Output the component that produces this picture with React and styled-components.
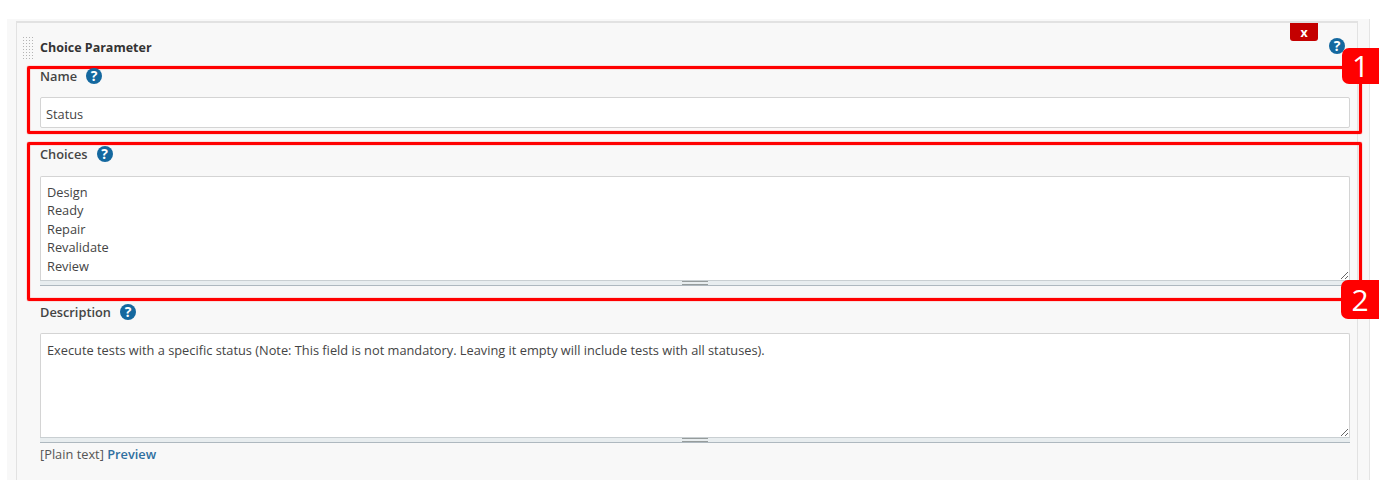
import React from 'react';
import styled, { createGlobalStyle } from 'styled-components';

const GlobalStyle = createGlobalStyle`
  html, body {
    margin: 0;
    padding: 0;
    background: #fff;
    overflow: hidden;
  }
  body {
    font-family: "Open Sans", "Noto Sans", sans-serif;
    font-size: 12.8px;
    color: #333;
  }
`;

const Page = styled.div`
  width: 1379px;
  height: 489px;
  padding: 19px 9px 9px 7px;
  box-sizing: border-box;
  position: relative;
  overflow: hidden;
`;

const Outer = styled.div`
  height: 461px;
  background: #f8f8f8;
  padding-left: 9px;
  padding-right: 11px;
  border-right: 1px solid #e4e4e4;
  box-sizing: border-box;
`;

const TopRule = styled.div`
  height: 3px;
  border-bottom: 1px solid #e2e2e2;
  box-sizing: border-box;
`;

const Panel = styled.div`
  height: calc(100% - 3px);
  border-left: 1px solid #e2e2e2;
  border-right: 1px solid #e2e2e2;
  border-top: 1px solid #e2e2e2;
  box-sizing: border-box;
  position: relative;
`;

const Header = styled.div`
  height: 43px;
  display: flex;
  align-items: center;
  padding: 4px 0 0 5px;
  box-sizing: border-box;
  position: relative;
`;

const Grip = styled.div`
  width: 12px;
  height: 23px;
  margin-right: 6px;
  margin-top: 1px;
  background-image: radial-gradient(circle, #b4b4b4 0.9px, transparent 1px);
  background-size: 3px 3px;
`;

const Title = styled.div`
  font-weight: 700;
  font-size: 12.5px;
  color: #333;
  padding-top: 2px;
`;

const DeleteButton = styled.button`
  position: absolute;
  top: 0;
  right: 39px;
  width: 28px;
  height: 18px;
  padding: 0;
  border: none;
  border-radius: 0 0 3px 3px;
  background: #c40000;
  color: #fff;
  font-family: inherit;
  font-size: 12.5px;
  font-weight: 700;
  line-height: 17px;
  text-align: center;
`;

const Help = styled.span`
  display: inline-flex;
  align-items: center;
  justify-content: center;
  width: 16px;
  height: 16px;
  border-radius: 50%;
  background: #14689f;
  color: #fff;
  font-family: "Open Sans", sans-serif;
  font-size: 14px;
  font-weight: 700;
  line-height: 16px;
`;

const HeaderHelp = styled(Help)`
  position: absolute;
  top: 15px;
  right: 12px;
`;

const Section = styled.section`
  margin: ${(p) => p.$margin};
  padding: ${(p) => p.$padding};
  position: relative;
  box-sizing: border-box;
  ${(p) =>
    p.$marked &&
    `
    border: 3px solid #ff0000;
    border-radius: 2px;
    box-shadow: 0 0 1px #ff0000, inset 0 0 1px #ff0000;
  `}
`;

const LabelRow = styled.div`
  display: flex;
  align-items: center;
  gap: 9px;
  height: ${(p) => p.$height || 16}px;
  color: #444;
  font-size: 12.8px;
  font-weight: 600;
`;

const Input = styled.input`
  display: block;
  width: 100%;
  height: 31px;
  margin-top: 14px;
  padding: 2px 5px 0;
  box-sizing: border-box;
  border: 1px solid #d4d4d4;
  border-radius: 2px;
  background: #fff;
  color: #444;
  font-family: inherit;
  font-size: 12.8px;
  outline: none;
`;

const AreaWrap = styled.div`
  margin-top: ${(p) => p.$top}px;
`;

const Area = styled.textarea`
  display: block;
  width: 100%;
  height: ${(p) => p.$height}px;
  padding: ${(p) => p.$padTop}px 6px 0;
  box-sizing: border-box;
  border: 1px solid #d4d4d4;
  border-bottom: none;
  border-radius: 2px 2px 0 0;
  background: #fff;
  color: #444;
  font-family: inherit;
  font-size: 12.8px;
  line-height: 18.4px;
  resize: vertical;
  overflow: hidden;
  outline: none;
`;

const AreaGrip = styled.div`
  height: 4px;
  background: #e8edef;
  border-top: 1px solid #c9cfd2;
  border-bottom: 1px solid #aeb8bf;
  display: flex;
  align-items: center;
  justify-content: center;

  &::after {
    content: '';
    width: 26px;
    height: 2px;
    border-top: 1px solid #969c9c;
    border-bottom: 1px solid #969c9c;
  }
`;

const FormatRow = styled.div`
  margin-top: 2px;
  font-size: 12.8px;
  color: #555;
`;

const PreviewLink = styled.a`
  color: #2f6f9f;
  font-weight: 600;
  text-decoration: none;
`;

const Badge = styled.div`
  position: absolute;
  right: 0;
  top: ${(p) => p.$top}px;
  width: ${(p) => p.$width}px;
  height: ${(p) => p.$height}px;
  display: flex;
  align-items: center;
  justify-content: center;
  border-radius: 7px 0 0 7px;
  background: #ff0000;
  color: #fff;
  font-family: "Open Sans", sans-serif;
  font-size: 30px;
  line-height: 1;
`;

const choices = ['Design', 'Ready', 'Repair', 'Revalidate', 'Review'].join('\n');
const description =
  'Execute tests with a specific status (Note: This field is not mandatory. Leaving it empty will include tests with all statuses).';

export default function App() {
  return (
    <Page>
      <GlobalStyle />
      <Outer>
        <TopRule />
        <Panel>
          <Header>
            <Grip />
            <Title>Choice Parameter</Title>
            <DeleteButton>x</DeleteButton>
            <HeaderHelp>?</HeaderHelp>
          </Header>
          <Section $marked $margin="0 -5px 0 10px" $padding="0 9px 3px 10px">
            <LabelRow $height={14}>
              Name <Help>?</Help>
            </LabelRow>
            <Input readOnly value="Status" />
          </Section>
          <Section $marked $margin="8px -5px 0 10px" $padding="1px 9px 12px 10px">
            <LabelRow>
              Choices <Help>?</Help>
            </LabelRow>
            <AreaWrap $top={14}>
              <Area readOnly $height={104} $padTop={6} value={choices} />
              <AreaGrip />
            </AreaWrap>
          </Section>
          <Section $margin="3px 0 0 0" $padding="0 7px 0 23px">
            <LabelRow>
              Description <Help>?</Help>
            </LabelRow>
            <AreaWrap $top={13}>
              <Area readOnly $height={104} $padTop={7} value={description} />
              <AreaGrip />
            </AreaWrap>
            <FormatRow>
              [Plain text] <PreviewLink href="#">Preview</PreviewLink>
            </FormatRow>
          </Section>
        </Panel>
      </Outer>
      <Badge $top={48} $width={37} $height={36}>1</Badge>
      <Badge $top={280} $width={38} $height={39}>2</Badge>
    </Page>
  );
}
